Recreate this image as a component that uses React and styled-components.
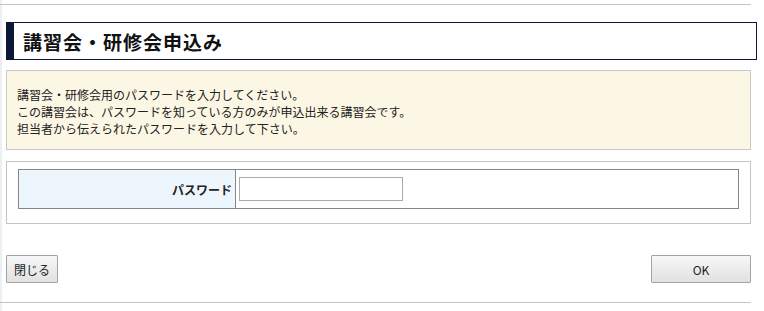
import styled, { createGlobalStyle } from 'styled-components';
import { useState } from 'react';

const GlobalStyle = createGlobalStyle`
    html, body {
        margin: 0;
        padding: 0;
        background: #fff;
    }
    body {
        font-family: "Noto Sans CJK JP", "Noto Sans", sans-serif;
        color: #222;
    }
`;

export default function App() {
    const [password, setPassword] = useState('');

    return (
        <Page>
            <GlobalStyle />
            <Rule />
            <Content>
                <Heading>講習会・研修会申込み</Heading>
                <Notice>
                    <p>講習会・研修会用のパスワードを入力してください。</p>
                    <p>この講習会は、パスワードを知っている方のみが申込出来る講習会です。</p>
                    <p>担当者から伝えられたパスワードを入力して下さい。</p>
                </Notice>
                <FormBox>
                    <FormTable>
                        <LabelCell>パスワード</LabelCell>
                        <InputCell>
                            <TextInput
                                type="password"
                                value={password}
                                onChange={(e) => setPassword(e.target.value)}
                            />
                        </InputCell>
                    </FormTable>
                </FormBox>
                <ButtonRow>
                    <Button width={52}>閉じる</Button>
                    <Button width={100}>OK</Button>
                </ButtonRow>
            </Content>
            <Rule />
        </Page>
    );
}

const Page = styled.div`
    min-height: 311px;
    box-sizing: border-box;
    padding-top: 4px;
    border-left: 2px solid #eceff3;
    width: 764px;
`;

const Rule = styled.div`
    width: 749px;
    height: 0;
    border-top: 1px solid #c4c4c4;
    margin-left: -2px;
    padding-left: 2px;
`;

const Content = styled.div`
    display: flex;
    flex-direction: column;
    padding: 0 0 19px 4px;
    width: 745px;
`;

const Heading = styled.h1`
    box-sizing: border-box;
    margin: 17px 0 0;
    width: 751px;
    height: 38px;
    display: flex;
    align-items: center;
    padding-left: 9px;
    border: 1px solid #0b1836;
    border-left: 8px solid #0b1836;
    font-size: 19px;
    font-weight: bold;
    color: #111;
    letter-spacing: 1px;
`;

const Notice = styled.div`
    box-sizing: border-box;
    margin-top: 10px;
    height: 80px;
    padding: 15px 10px 13px;
    background: #fcf7e4;
    border: 1px solid #c8c8c8;
    font-size: 12px;
    line-height: 17px;
    color: #222;
    p {
        margin: 0;
    }
`;

const FormBox = styled.div`
    box-sizing: border-box;
    margin-top: 11px;
    height: 63px;
    padding: 7px 11px;
    border: 1px solid #c4c4c4;
`;

const FormTable = styled.div`
    display: flex;
    height: 40px;
    box-sizing: border-box;
    border: 1px solid #868686;
`;

const LabelCell = styled.div`
    box-sizing: border-box;
    width: 217px;
    display: flex;
    align-items: center;
    justify-content: flex-end;
    padding-right: 3px;
    background: #eef6fd;
    border-right: 1px solid #868686;
    font-size: 12px;
    font-weight: bold;
    color: #222;
`;

const InputCell = styled.div`
    flex: 1;
    display: flex;
    align-items: center;
    padding-left: 3px;
`;

const TextInput = styled.input`
    box-sizing: border-box;
    width: 164px;
    height: 24px;
    border: 1px solid #aaa;
    padding: 2px 4px;
    font-size: 12px;
    outline: none;
`;

const ButtonRow = styled.div`
    display: flex;
    justify-content: space-between;
    margin-top: 31px;
`;

const Button = styled.button`
    box-sizing: border-box;
    width: ${(props) => props.width}px;
    height: 28px;
    border: 1px solid #a3a3a3;
    border-radius: 1px;
    background: linear-gradient(#f7f7f7, #e1e1e1);
    font-family: "Noto Sans CJK JP", "Noto Sans", sans-serif;
    font-size: 12px;
    color: #222;
    cursor: pointer;
    padding: 0;
`;
